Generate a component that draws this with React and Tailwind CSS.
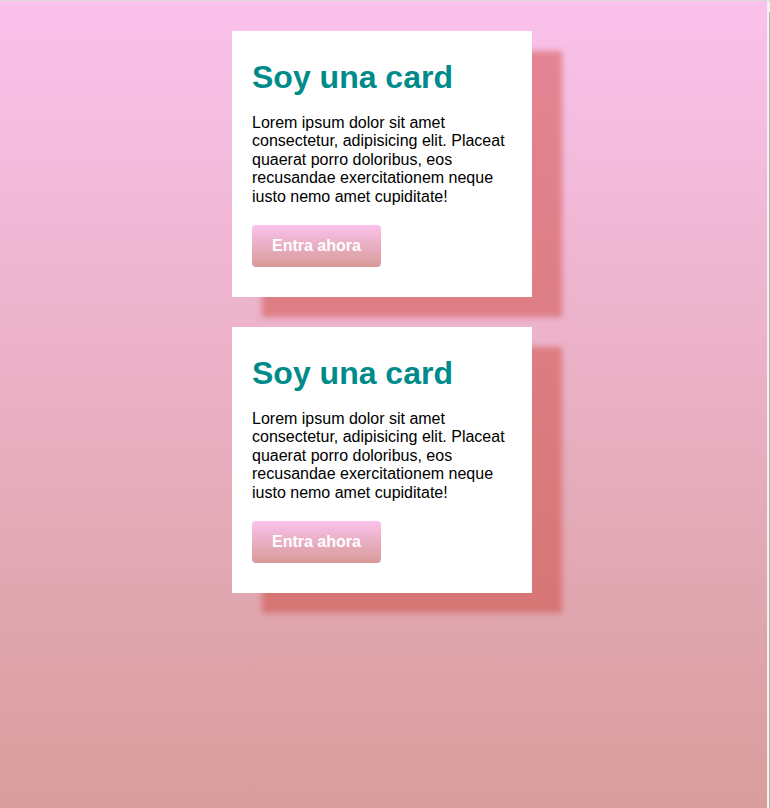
export default function App() {
  const Card = () => (
    <div className="w-[300px] bg-white p-5 flex flex-col items-start shadow-[30px_20px_6px_rgba(205,60,45,0.45)]">
      <h1 className="mt-2 text-[32px] leading-[37px] font-bold text-[#008b8b]">Soy una card</h1>
      <p className="mt-[18px] text-[16px] leading-[18.4px] text-black">
        Lorem ipsum dolor sit amet consectetur, adipisicing elit. Placeat quaerat porro doloribus, eos recusandae exercitationem neque iusto nemo amet cupiditate!
      </p>
      <button className="mt-[19px] mb-[10px] h-[42px] px-5 rounded-[4px] bg-gradient-to-b from-[#fac2ec] to-[#d89a98] text-white font-bold text-[16px]">
        Entra ahora
      </button>
    </div>
  );
  return (
    <div className="flex h-[808px] w-[770px] overflow-hidden" style={{ fontFamily: '"Liberation Sans", Arial, sans-serif' }}>
      <div className="flex-1 border-t border-[#dcdcdc] bg-gradient-to-b from-[#fac2ec] to-[#d89d9b] flex flex-col items-center pt-[30px] pr-[3px] gap-[30px]">
        <Card />
        <Card />
      </div>
      <div className="w-[3px] bg-[#f1f1f1] border-t border-[#dcdcdc] flex justify-end">
        <div className="mt-[11px] w-px bg-[#b5b5b5] h-full"></div>
      </div>
    </div>
  );
}
